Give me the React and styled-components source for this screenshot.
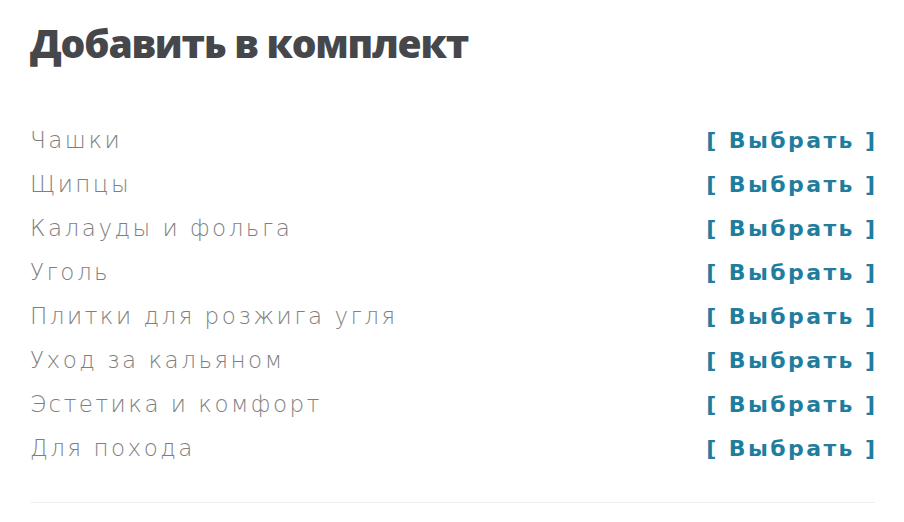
import React from "react";
import styled, { createGlobalStyle } from "styled-components";

const Global = createGlobalStyle`
  html, body { margin: 0; padding: 0; background: #ffffff; }
  body { font-family: "Open Sans", "Noto Sans", sans-serif; }
`;

const Panel = styled.section`
  width: 904px;
  height: 522px;
  box-sizing: border-box;
  padding: 20px 29px 0 30px;
  display: flex;
  flex-direction: column;
`;

const Title = styled.h2`
  margin: 0;
  font-family: "Open Sans", sans-serif;
  font-weight: 800;
  font-size: 39px;
  line-height: 46px;
  color: #46474b;
  letter-spacing: -1.2px;
`;

const List = styled.ul`
  list-style: none;
  margin: 52px 0 0;
  padding: 0;
  display: flex;
  flex-direction: column;
`;

const Row = styled.li`
  display: flex;
  justify-content: space-between;
  align-items: baseline;
  height: 44px;
  line-height: 44px;
`;

const Label = styled.span`
  font-family: "DejaVu Sans", sans-serif;
  font-weight: 200;
  font-size: 23px;
  letter-spacing: 2.5px;
  color: #7f7f7f;
`;

const Pick = styled.a`
  font-family: "DejaVu Sans", sans-serif;
  font-weight: 700;
  font-size: 22px;
  letter-spacing: 2.4px;
  margin-right: -2.4px;
  color: #1f7d9e;
  text-decoration: none;
  cursor: pointer;
`;

const Divider = styled.hr`
  margin: 32px 0 0;
  border: 0;
  border-top: 1px solid #efefef;
`;

const items = [
  "Чашки",
  "Щипцы",
  "Калауды и фольга",
  "Уголь",
  "Плитки для розжига угля",
  "Уход за кальяном",
  "Эстетика и комфорт",
  "Для похода",
];

export default function App() {
  return (
    <>
      <Global />
      <Panel>
        <Title>Добавить в комплект</Title>
        <List>
          {items.map((name) => (
            <Row key={name}>
              <Label>{name}</Label>
              <Pick>[ Выбрать ]</Pick>
            </Row>
          ))}
        </List>
        <Divider />
      </Panel>
    </>
  );
}
